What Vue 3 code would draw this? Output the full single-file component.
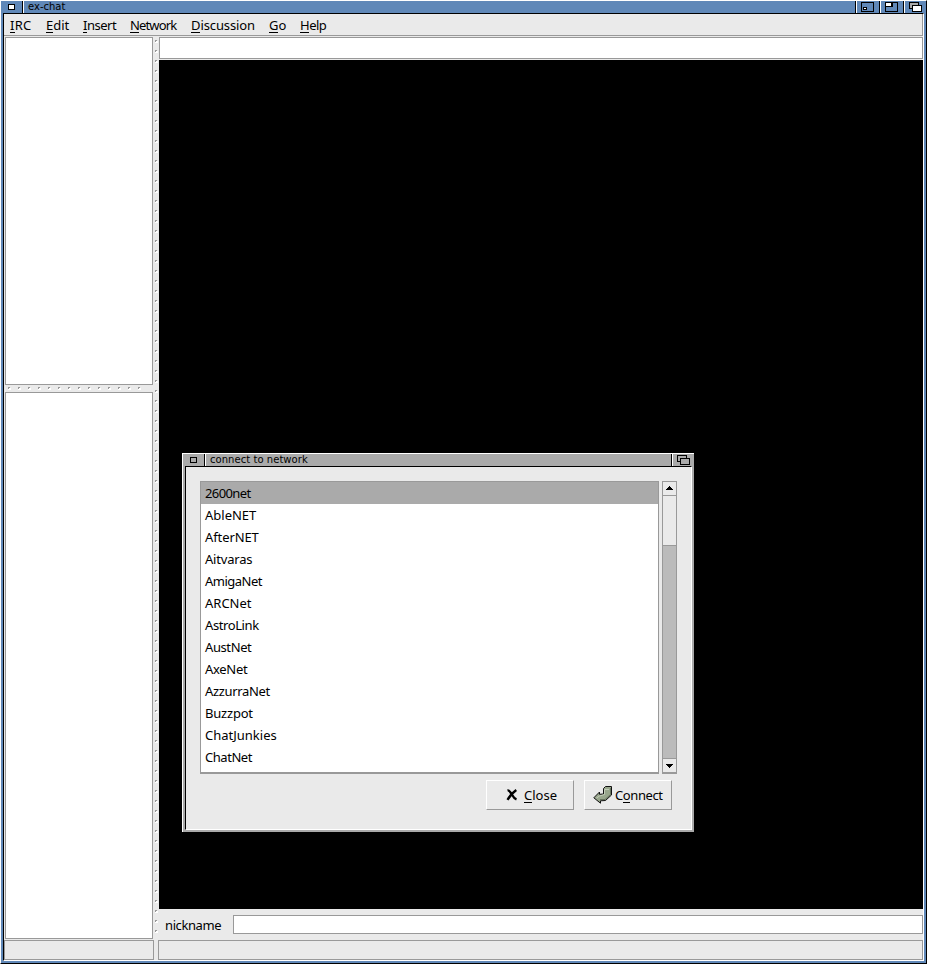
<script setup>
const menus = [
  { k: 'I', r: 'RC', w: 36, s: 0.3 },
  { k: 'E', r: 'dit', w: 37, s: 0 },
  { k: 'I', r: 'nsert', w: 47, s: -0.5 },
  { k: 'N', r: 'etwork', w: 61, s: -0.85 },
  { k: 'D', r: 'iscussion', w: 78, s: -0.1 },
  { k: 'G', r: 'o', w: 31, s: 0 },
  { k: 'H', r: 'elp', w: 40, s: -0.5 }
]
const networks = [
  { n: '2600net', s: -0.6 },
  { n: 'AbleNET', s: 0 },
  { n: 'AfterNET', s: -0.1 },
  { n: 'Aitvaras', s: -0.2 },
  { n: 'AmigaNet', s: -0.5 },
  { n: 'ARCNet', s: 0 },
  { n: 'AstroLink', s: -0.4 },
  { n: 'AustNet', s: -0.4 },
  { n: 'AxeNet', s: -0.3 },
  { n: 'AzzurraNet', s: -0.33 },
  { n: 'Buzzpot', s: -0.2 },
  { n: 'ChatJunkies', s: 0 },
  { n: 'ChatNet', s: -0.45 }
]
</script>

<template>
  <div class="window">
    <header class="title">
      <div class="tclose"><svg width="7" height="7" shape-rendering="crispEdges"><path d="M0 0h7v6H0z" /><path d="M1 1h5v4H1z" fill="#fff" /></svg></div>
      <div class="caption"><span>ex-chat</span></div>
      <div class="gadget">
        <svg width="22" height="12" shape-rendering="crispEdges"><path d="M4.5 1.5h12v9h-12z" fill="none" stroke="#000" /><path d="M6 6h4v3H6z" /><path d="M7 7h2v1H7z" fill="#fff" /></svg>
      </div>
      <div class="gadget">
        <svg width="22" height="12" shape-rendering="crispEdges"><path d="M4.5 1.5h12v9h-12z" fill="none" stroke="#000" /><path d="M5 1h7v5H5z" /><path d="M5 2h5v3H5z" fill="#fff" /></svg>
      </div>
      <div class="gadget last">
        <svg width="22" height="12" shape-rendering="crispEdges"><path d="M4.5 1.5h9v6h-9z" fill="#aaa" stroke="#000" /><path d="M7.5 4.5h9v6h-9z" fill="#fff" stroke="#000" /></svg>
      </div>
    </header>
    <div class="frame">
      <nav class="menubar">
        <span v-for="m in menus" :key="m.k + m.r" :style="{ width: m.w + 'px', letterSpacing: m.s + 'px' }"><u>{{ m.k }}</u>{{ m.r }}</span>
      </nav>
      <main class="body">
        <aside class="left">
          <div class="pane users"></div>
          <div class="hgrip">
            <svg width="136" height="3" shape-rendering="crispEdges">
              <defs><pattern id="hdots" width="10" height="3" patternUnits="userSpaceOnUse"><path d="M1 1h2v2H0V2h1z" fill="#fff" /><path d="M0 0h2v1H1v1H0z" fill="#999" /></pattern></defs>
              <rect width="136" height="3" fill="url(#hdots)" />
            </svg>
          </div>
          <div class="pane channels"></div>
        </aside>
        <div class="vgrip">
          <svg width="3" height="893" shape-rendering="crispEdges">
            <defs><pattern id="vdots" width="3" height="10" patternUnits="userSpaceOnUse"><path d="M1 1h2v2H0V2h1z" fill="#fff" /><path d="M0 0h2v1H1v1H0z" fill="#999" /></pattern></defs>
            <rect width="3" height="893" fill="url(#vdots)" />
          </svg>
        </div>
        <section class="right">
          <div class="topic"></div>
          <div class="chat"></div>
          <div class="nick"><label>nickname</label><div class="entry"></div></div>
        </section>
      </main>
      <footer class="status"><div class="s1"></div><div class="s2"></div></footer>
    </div>

    <div class="dialog">
      <header class="title grey">
        <div class="tclose"><svg width="7" height="7" shape-rendering="crispEdges"><path d="M.5.5h6v5h-6z" fill="none" stroke="#000" /></svg></div>
        <div class="caption"><span class="c2">connect to network</span></div>
        <div class="gadget last">
          <svg width="22" height="12" shape-rendering="crispEdges"><path d="M4.5 1.5h9v6h-9z" fill="#aaa" stroke="#000" /><path d="M7.5 4.5h9v6h-9z" fill="#aaa" stroke="#000" /></svg>
        </div>
      </header>
      <div class="dbody">
        <div class="listrow">
          <ul class="list">
            <li v-for="(e, i) in networks" :key="e.n" :class="{ sel: i === 0 }" :style="{ letterSpacing: e.s + 'px' }">{{ e.n }}</li>
          </ul>
          <div class="scroll">
            <div class="arrow"><svg width="7" height="4" shape-rendering="crispEdges"><path d="M3 0h1v1h1v1h1v1h1v1H0V3h1V2h1V1h1z" /></svg></div>
            <div class="thumb"></div>
            <div class="trough"></div>
            <div class="arrow down"><svg width="7" height="4" shape-rendering="crispEdges"><path d="M0 0h7v1H6v1H5v1H4v1H3V3H2V2H1V1H0z" /></svg></div>
          </div>
        </div>
        <div class="buttons">
          <button type="button" class="close">
            <svg width="12" height="12" viewBox="0 0 12 12"><path d="M1.5 1.5c1.6-.4 2.5 1 4.2 3.8 1.3 2.2 2.5 4.2 4.8 5M10.3 1C7.500 3 4 6.500 1.500 10.800" fill="none" stroke="#000" stroke-width="2.300" /></svg>
            <span><u>C</u>lose</span>
          </button>
          <button type="button" class="connect">
            <svg width="20" height="18" viewBox="0 0 20 18"><path d="M10.500 2.500l2-2h6v8.500l-6 5.500-5 .3v2.400L.8 11.800 6.500 6v2.300l4-.3z" fill="#98a68c" stroke="#111" /><path d="M11.500 3.500h4.500M11.500 3.500v5l-5 1.500-3 2" fill="none" stroke="#c2ccb8" /><path d="M17.500 2v6.500L12 13.500H7" fill="none" stroke="#66735d" /></svg>
            <span>C<u>o</u>nnect</span>
          </button>
        </div>
      </div>
    </div>
  </div>
</template>

<style>
body { margin: 0; background: #000; }
</style>
<style scoped>
* { box-sizing: border-box; }
.window { width: 927px; height: 964px; position: relative; display: flex; flex-direction: column; background: #6088b8; border: 1px solid #000; border-top-color: #fff; border-left-color: #fff; font: 13px/22px "Noto Sans", sans-serif; color: #000; }
svg { display: block; flex: none; }
u { text-decoration: none; box-shadow: inset 0 -1px #000; display: inline-block; line-height: 15px; }
.title { display: flex; height: 12px; flex: none; }
.tclose { width: 22px; border-right: 1px solid #000; padding: 3px 0 0 7px; }
.caption { flex: 1; border-left: 1px solid #fff; padding-left: 4px; font: 10px/11px "DejaVu Sans", sans-serif; white-space: nowrap; }
.c2 { letter-spacing: 0.05px; }
.gadget { width: 24px; border-left: 1px solid #000; box-shadow: inset 1px 0 #fff; padding-left: 1px; overflow: hidden; }
.gadget.last { width: 23px; }
.frame { margin: 0 2px 2px; flex: 1; border: 1px solid #fff; border-top-color: #000; border-left-color: #000; background: #eaeaea; display: flex; flex-direction: column; }
.menubar { height: 22px; border-bottom: 1px solid #999; border-right: 1px solid #999; display: flex; padding-left: 6px; flex: none; line-height: 23px; white-space: nowrap; }
.body { height: 904px; display: flex; flex: none; padding-top: 1px; }
.left { width: 149px; padding-left: 1px; display: flex; flex-direction: column; }
.pane { background: #fff; border: 1px solid #999; }
.users { height: 348px; }
.hgrip { height: 7px; padding: 2px 0 0 3px; }
.channels { height: 547px; }
.vgrip { width: 6px; padding: 3px 0 0 2px; }
.right { flex: 1; display: flex; flex-direction: column; }
.topic { height: 22px; background: #fff; border: 1px solid #999; }
.chat { height: 849px; margin-top: 1px; background: #000; }
.nick { display: flex; padding: 6px 0 0 6px; }
.nick label { width: 68px; line-height: 20px; letter-spacing: -0.4px; }
.entry { flex: 1; height: 19px; background: #fff; border: 1px solid #999; }
.status { display: flex; gap: 4px; height: 20px; }
.status div { border: 1px solid #999; }
.s1 { width: 150px; }
.s2 { flex: 1; }
.dialog { position: absolute; left: 181px; top: 452px; width: 512px; height: 379px; background: #aaa; border-top: 1px solid #fff; border-left: 1px solid #fff; display: flex; flex-direction: column; }
.dbody { flex: 1; margin: 0 2px 2px; border: 1px solid #fff; border-top-color: #000; border-left-color: #000; background: #eaeaea; padding: 14px 14px 0; }
.listrow { display: flex; gap: 3px; }
.list { list-style: none; margin: 0; padding: 0; width: 459px; height: 293px; background: #fff; border: 1px solid #999; border-bottom-width: 2px; overflow: hidden; }
li { height: 22px; line-height: 23px; padding-left: 4px; }
.sel { background: #aaa; }
.scroll { width: 15px; height: 293px; border: 1px solid #999; border-bottom-width: 2px; background: #bbb; display: flex; flex-direction: column; }
.arrow { height: 14px; background: #eaeaea; border-bottom: 1px solid #999; padding: 4px 0 0 3px; }
.arrow.down { border: 0; border-top: 1px solid #999; padding-top: 5px; }
.thumb { height: 50px; background: #eaeaea; border-bottom: 1px solid #999; }
.trough { flex: 1; }
.buttons { display: flex; gap: 10px; padding: 6px 0 0 286px; }
button { width: 88px; height: 30px; border: 1px solid #999; border-top-color: #fff; border-left-color: #fff; background: #eaeaea; padding: 0; display: flex; align-items: center; font: inherit; color: inherit; }
.close { padding-left: 19px; gap: 6px; }
.connect { padding-left: 8px; gap: 2px; letter-spacing: -0.4px; }
</style>
